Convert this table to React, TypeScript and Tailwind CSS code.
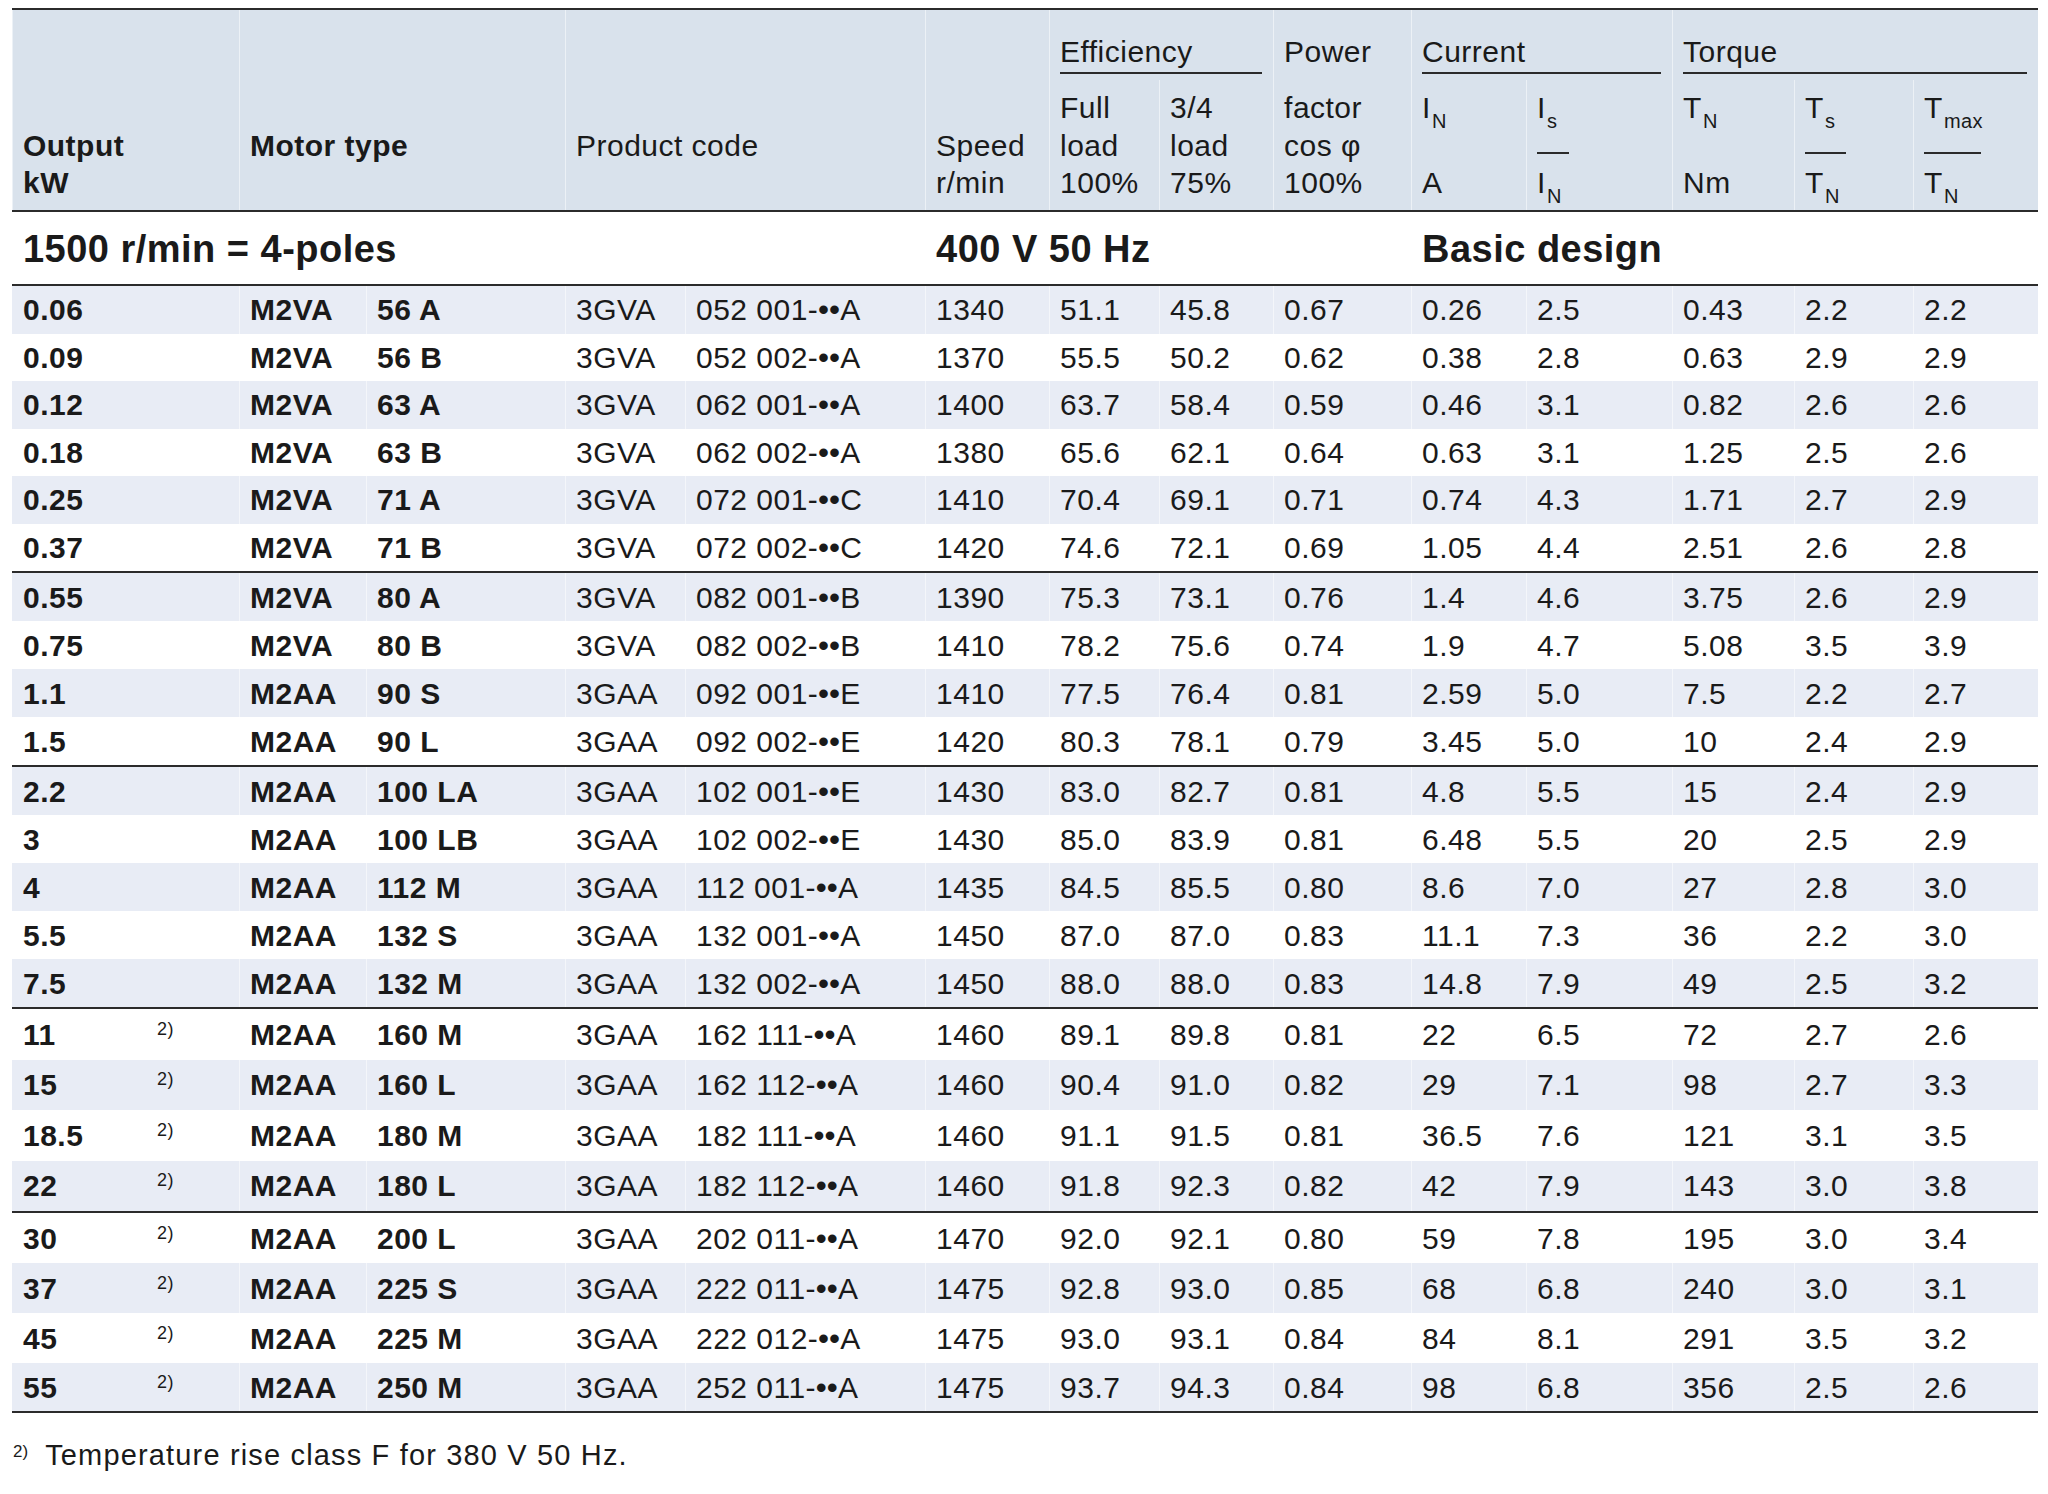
import React from "react";

// [output, motor, size, code1, code2, speed, full, threeQ, pf, iN, isIn, tN, tsTn, tmaxTn]
type Row = string[];

const groups: Row[][] = [
    [
        ["0.06", "M2VA", "56 A", "3GVA", "052 001-", "A", "1340", "51.1", "45.8", "0.67", "0.26", "2.5", "0.43", "2.2", "2.2"],
        ["0.09", "M2VA", "56 B", "3GVA", "052 002-", "A", "1370", "55.5", "50.2", "0.62", "0.38", "2.8", "0.63", "2.9", "2.9"],
        ["0.12", "M2VA", "63 A", "3GVA", "062 001-", "A", "1400", "63.7", "58.4", "0.59", "0.46", "3.1", "0.82", "2.6", "2.6"],
        ["0.18", "M2VA", "63 B", "3GVA", "062 002-", "A", "1380", "65.6", "62.1", "0.64", "0.63", "3.1", "1.25", "2.5", "2.6"],
        ["0.25", "M2VA", "71 A", "3GVA", "072 001-", "C", "1410", "70.4", "69.1", "0.71", "0.74", "4.3", "1.71", "2.7", "2.9"],
        ["0.37", "M2VA", "71 B", "3GVA", "072 002-", "C", "1420", "74.6", "72.1", "0.69", "1.05", "4.4", "2.51", "2.6", "2.8"],
    ],
    [
        ["0.55", "M2VA", "80 A", "3GVA", "082 001-", "B", "1390", "75.3", "73.1", "0.76", "1.4", "4.6", "3.75", "2.6", "2.9"],
        ["0.75", "M2VA", "80 B", "3GVA", "082 002-", "B", "1410", "78.2", "75.6", "0.74", "1.9", "4.7", "5.08", "3.5", "3.9"],
        ["1.1", "M2AA", "90 S", "3GAA", "092 001-", "E", "1410", "77.5", "76.4", "0.81", "2.59", "5.0", "7.5", "2.2", "2.7"],
        ["1.5", "M2AA", "90 L", "3GAA", "092 002-", "E", "1420", "80.3", "78.1", "0.79", "3.45", "5.0", "10", "2.4", "2.9"],
    ],
    [
        ["2.2", "M2AA", "100 LA", "3GAA", "102 001-", "E", "1430", "83.0", "82.7", "0.81", "4.8", "5.5", "15", "2.4", "2.9"],
        ["3", "M2AA", "100 LB", "3GAA", "102 002-", "E", "1430", "85.0", "83.9", "0.81", "6.48", "5.5", "20", "2.5", "2.9"],
        ["4", "M2AA", "112 M", "3GAA", "112 001-", "A", "1435", "84.5", "85.5", "0.80", "8.6", "7.0", "27", "2.8", "3.0"],
        ["5.5", "M2AA", "132 S", "3GAA", "132 001-", "A", "1450", "87.0", "87.0", "0.83", "11.1", "7.3", "36", "2.2", "3.0"],
        ["7.5", "M2AA", "132 M", "3GAA", "132 002-", "A", "1450", "88.0", "88.0", "0.83", "14.8", "7.9", "49", "2.5", "3.2"],
    ],
    [
        ["11", "M2AA", "160 M", "3GAA", "162 111-", "A", "1460", "89.1", "89.8", "0.81", "22", "6.5", "72", "2.7", "2.6"],
        ["15", "M2AA", "160 L", "3GAA", "162 112-", "A", "1460", "90.4", "91.0", "0.82", "29", "7.1", "98", "2.7", "3.3"],
        ["18.5", "M2AA", "180 M", "3GAA", "182 111-", "A", "1460", "91.1", "91.5", "0.81", "36.5", "7.6", "121", "3.1", "3.5"],
        ["22", "M2AA", "180 L", "3GAA", "182 112-", "A", "1460", "91.8", "92.3", "0.82", "42", "7.9", "143", "3.0", "3.8"],
    ],
    [
        ["30", "M2AA", "200 L", "3GAA", "202 011-", "A", "1470", "92.0", "92.1", "0.80", "59", "7.8", "195", "3.0", "3.4"],
        ["37", "M2AA", "225 S", "3GAA", "222 011-", "A", "1475", "92.8", "93.0", "0.85", "68", "6.8", "240", "3.0", "3.1"],
        ["45", "M2AA", "225 M", "3GAA", "222 012-", "A", "1475", "93.0", "93.1", "0.84", "84", "8.1", "291", "3.5", "3.2"],
        ["55", "M2AA", "250 M", "3GAA", "252 011-", "A", "1475", "93.7", "94.3", "0.84", "98", "6.8", "356", "2.5", "2.6"],
    ],
];

// groups 4 and 5 carry the footnote mark
const withNote = [false, false, false, true, true];
const rowH = ["h-[47.5px]", "h-[48px]", "h-[48px]", "h-[50.5px]", "h-[50px]"];
const firstRowH = ["h-[47.5px]", "h-[50px]", "h-[50px]", "h-[52.5px]", "h-[52px]"];

const line = "border-[#2b2b2b]";
const sep = "shadow-[inset_1px_0_0_rgba(255,255,255,0.5)]";

function Sub({ children }: { children: React.ReactNode }) {
    return <span className="relative top-[10px] ml-[1px] text-[20px]">{children}</span>;
}

function Fraction({ top, bottom, bar }: { top: React.ReactNode; bottom: React.ReactNode; bar: string }) {
    return (
        <>
            <div className="h-[37.5px]">{top}</div>
            <div className="flex h-[37.5px] items-end pb-[10px]">
                <div className={`h-[2px] bg-[#2b2b2b] ${bar}`} />
            </div>
            <div className="h-[37.5px]">{bottom}</div>
        </>
    );
}

function Stack({ lines }: { lines: React.ReactNode[] }) {
    return (
        <>
            {lines.map((l, i) => (
                <div key={i} className="h-[37.5px]">
                    {l}
                </div>
            ))}
        </>
    );
}

export default function App() {
    const spanCell = `px-[11px] pb-[8.5px] align-bottom text-left leading-[37.5px] border-t-2 border-b-2 ${line} ${sep}`;
    const groupCell = `px-[11px] pt-[23px] pb-[6px] align-top text-left font-normal border-t-2 ${line} ${sep}`;
    const subCell = `px-[11px] pt-[9px] pb-[8.5px] align-top text-left font-normal leading-[37.5px] border-b-2 ${line} ${sep}`;
    const sectionCell = `px-[11px] pt-[9px] align-top text-[38px] font-bold whitespace-nowrap border-b-2 ${line}`;

    let stripe = 0;

    return (
        <div className="min-h-screen bg-white pl-[12px] pt-[8px] font-['Liberation_Sans',Arial,sans-serif] tracking-[0.03em] text-[#1a1a1a]">
            <table className="w-[2026px] table-fixed border-separate border-spacing-0 text-[30px]">
                <colgroup>
                    <col className="w-[134px]" />
                    <col className="w-[93px]" />
                    <col className="w-[127px]" />
                    <col className="w-[199px]" />
                    <col className="w-[120px]" />
                    <col className="w-[240px]" />
                    <col className="w-[124px]" />
                    <col className="w-[110px]" />
                    <col className="w-[114px]" />
                    <col className="w-[138px]" />
                    <col className="w-[115px]" />
                    <col className="w-[146px]" />
                    <col className="w-[122px]" />
                    <col className="w-[119px]" />
                    <col className="w-[125px]" />
                </colgroup>
                <thead className="bg-[#d9e2ec]">
                    <tr className="h-[70px]">
                        <th rowSpan={2} colSpan={2} className={`${spanCell} font-bold`}>
                            <div>Output</div>
                            <div>kW</div>
                        </th>
                        <th rowSpan={2} colSpan={2} className={`${spanCell} font-bold`}>
                            <div>Motor type</div>
                            <div>&nbsp;</div>
                        </th>
                        <th rowSpan={2} colSpan={2} className={`${spanCell} font-normal`}>
                            <div>Product code</div>
                            <div>&nbsp;</div>
                        </th>
                        <th rowSpan={2} className={`${spanCell} font-normal`}>
                            <div>Speed</div>
                            <div>r/min</div>
                        </th>
                        <th colSpan={2} className={groupCell}>
                            <div className={`border-b-2 ${line} pb-[1.5px] leading-[37.5px]`}>Efficiency</div>
                        </th>
                        <th className={groupCell}>
                            <div className="pb-[3.5px] leading-[37.5px]">Power</div>
                        </th>
                        <th colSpan={2} className={groupCell}>
                            <div className={`border-b-2 ${line} pb-[1.5px] leading-[37.5px]`}>Current</div>
                        </th>
                        <th colSpan={3} className={groupCell}>
                            <div className={`border-b-2 ${line} pb-[1.5px] leading-[37.5px]`}>Torque</div>
                        </th>
                    </tr>
                    <tr className="h-[132px]">
                        <th className={subCell}>
                            <Stack lines={["Full", "load", "100%"]} />
                        </th>
                        <th className={subCell}>
                            <Stack lines={["3/4", "load", "75%"]} />
                        </th>
                        <th className={subCell}>
                            <Stack lines={["factor", "cos φ", "100%"]} />
                        </th>
                        <th className={subCell}>
                            <Stack lines={[<>I<Sub>N</Sub></>, "", "A"]} />
                        </th>
                        <th className={subCell}>
                            <Fraction top={<>I<Sub>s</Sub></>} bottom={<>I<Sub>N</Sub></>} bar="w-[32px]" />
                        </th>
                        <th className={subCell}>
                            <Stack lines={[<>T<Sub>N</Sub></>, "", "Nm"]} />
                        </th>
                        <th className={subCell}>
                            <Fraction top={<>T<Sub>s</Sub></>} bottom={<>T<Sub>N</Sub></>} bar="w-[41px]" />
                        </th>
                        <th className={subCell}>
                            <Fraction top={<>T<Sub>max</Sub></>} bottom={<>T<Sub>N</Sub></>} bar="w-[57px]" />
                        </th>
                    </tr>
                </thead>
                <tbody>
                    <tr className="h-[74px]">
                        <td colSpan={6} className={sectionCell}>
                            1500 r/min = 4-poles
                        </td>
                        <td colSpan={4} className={sectionCell}>
                            400 V 50 Hz
                        </td>
                        <td colSpan={5} className={sectionCell}>
                            Basic design
                        </td>
                    </tr>
                    {groups.map((rows, gi) =>
                        rows.map((r, ri) => {
                            const shaded = stripe++ % 2 === 0;
                            const top = gi > 0 && ri === 0 ? `border-t-2 ${line}` : "";
                            const bottom = gi === groups.length - 1 && ri === rows.length - 1 ? `border-b-2 ${line}` : "";
                            const base = `px-[11px] align-middle whitespace-nowrap ${top} ${bottom}`;
                            const cell = `${base} ${sep}`;
                            const h = ri === 0 ? firstRowH[gi] : rowH[gi];
                            return (
                                <tr key={r[0]} className={`${h} ${shaded ? "bg-[#e8ecf5]" : "bg-white"}`}>
                                    <td className={`${base} font-bold`}>{r[0]}</td>
                                    <td className={`${base} text-[18px]`}>
                                        {withNote[gi] && <span className="relative -top-[5px]">2)</span>}
                                    </td>
                                    <td className={`${cell} font-bold`}>{r[1]}</td>
                                    <td className={`${cell} font-bold`}>{r[2]}</td>
                                    <td className={cell}>{r[3]}</td>
                                    <td className={cell}>
                                        {r[4]}
                                        <span className="font-bold">••</span>
                                        {r[5]}
                                    </td>
                                    {r.slice(6).map((v, ci) => (
                                        <td key={ci} className={cell}>
                                            {v}
                                        </td>
                                    ))}
                                </tr>
                            );
                        })
                    )}
                </tbody>
            </table>
            <div className="mt-[21px] pl-[1px] text-[29px] tracking-[0.04em]">
                <span className="relative -top-[8px] text-[17px] tracking-normal">2)</span>
                <span className="ml-[17px]">Temperature rise class F for 380 V 50 Hz.</span>
            </div>
        </div>
    );
}
